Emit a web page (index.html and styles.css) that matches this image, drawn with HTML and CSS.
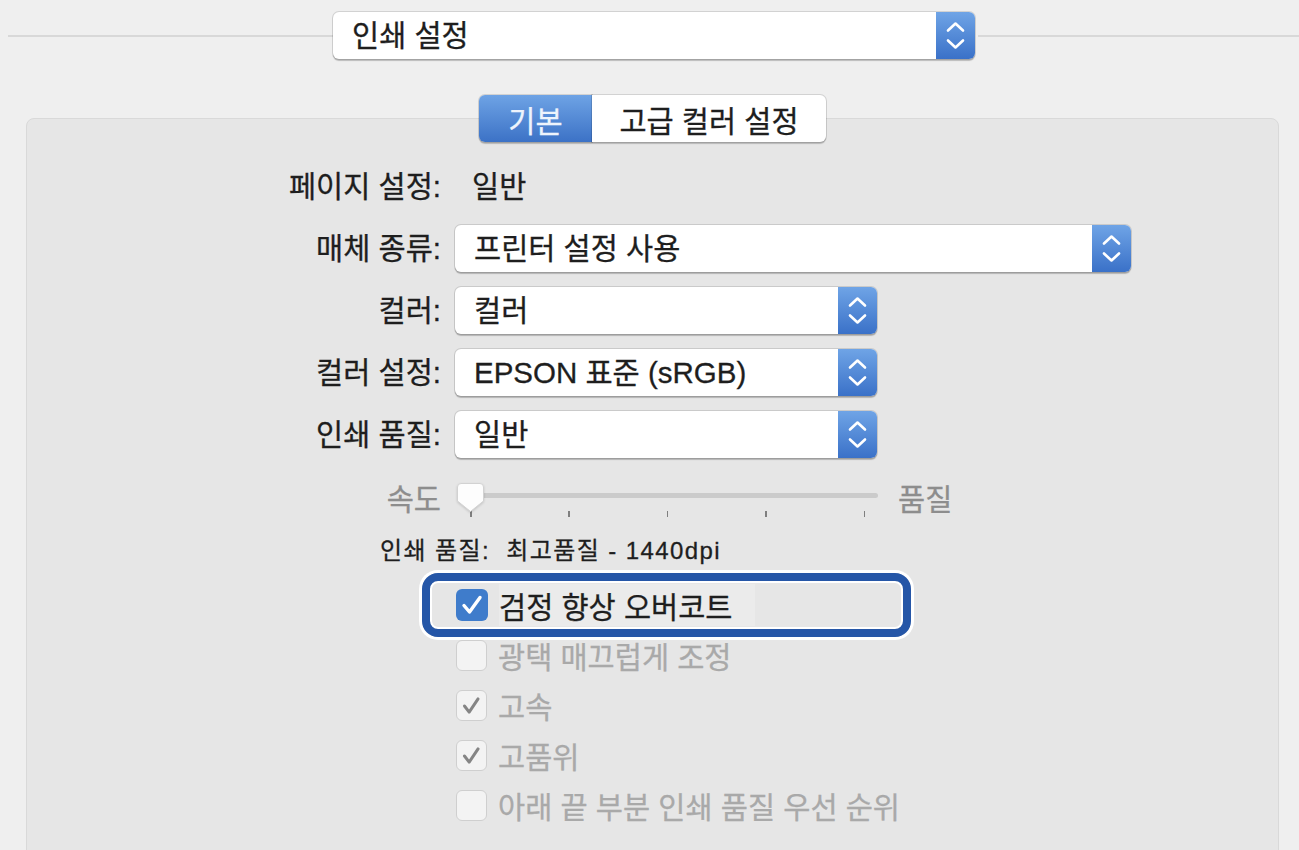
FILE: index.html
```html
<!DOCTYPE html>
<html lang="ko">
<head>
<meta charset="utf-8">
<title>인쇄 설정</title>
<link rel="stylesheet" href="styles.css">
</head>
<body>
<div class="window">
  <div class="header">
    <div class="rule rule-left"></div>
    <div class="popup popup-top">
      <span class="popup-text">인쇄 설정</span>
      <span class="stepper"><svg viewBox="0 0 39 47" width="39" height="47"><path d="M12 18.5 L19.5 11.5 L27 18.5 M12 28.5 L19.5 35.5 L27 28.5" fill="none" stroke="#fff" stroke-width="2.6" stroke-linecap="round" stroke-linejoin="round"/></svg></span>
    </div>
    <div class="rule rule-right"></div>
  </div>

  <div class="panel">
    <div class="tabs">
      <div class="tab tab-active">기본</div>
      <div class="tab">고급 컬러 설정</div>
    </div>

    <div class="form">
      <div class="label">페이지 설정:</div>
      <div class="value">일반</div>

      <div class="label">매체 종류:</div>
      <div class="popup popup-wide">
        <span class="popup-text">프린터 설정 사용</span>
        <span class="stepper"><svg viewBox="0 0 39 47" width="39" height="47"><path d="M12 18.5 L19.5 11.5 L27 18.5 M12 28.5 L19.5 35.5 L27 28.5" fill="none" stroke="#fff" stroke-width="2.6" stroke-linecap="round" stroke-linejoin="round"/></svg></span>
      </div>

      <div class="label">컬러:</div>
      <div class="popup popup-mid">
        <span class="popup-text">컬러</span>
        <span class="stepper"><svg viewBox="0 0 39 47" width="39" height="47"><path d="M12 18.5 L19.5 11.5 L27 18.5 M12 28.5 L19.5 35.5 L27 28.5" fill="none" stroke="#fff" stroke-width="2.6" stroke-linecap="round" stroke-linejoin="round"/></svg></span>
      </div>

      <div class="label">컬러 설정:</div>
      <div class="popup popup-mid">
        <span class="popup-text">EPSON 표준 (sRGB)</span>
        <span class="stepper"><svg viewBox="0 0 39 47" width="39" height="47"><path d="M12 18.5 L19.5 11.5 L27 18.5 M12 28.5 L19.5 35.5 L27 28.5" fill="none" stroke="#fff" stroke-width="2.6" stroke-linecap="round" stroke-linejoin="round"/></svg></span>
      </div>

      <div class="label">인쇄 품질:</div>
      <div class="popup popup-mid">
        <span class="popup-text">일반</span>
        <span class="stepper"><svg viewBox="0 0 39 47" width="39" height="47"><path d="M12 18.5 L19.5 11.5 L27 18.5 M12 28.5 L19.5 35.5 L27 28.5" fill="none" stroke="#fff" stroke-width="2.6" stroke-linecap="round" stroke-linejoin="round"/></svg></span>
      </div>
    </div>

    <div class="slider-row">
      <div class="label label-dim">속도</div>
      <div class="slider-wrap">
        <div class="slider">
          <div class="track"></div>
          <div class="ticks"><i></i><i></i><i></i><i></i><i></i></div>
          <svg class="thumb" viewBox="0 0 29 31" width="29" height="31"><path d="M5 1.5 H24 Q27.5 1.5 27.5 5 V19 L14.5 29.5 L1.5 19 V5 Q1.5 1.5 5 1.5 Z" fill="#fdfdfd" stroke="#d2d2d2" stroke-width="1"/></svg>
        </div>
        <span class="slider-end">품질</span>
      </div>
    </div>

    <div class="info">인쇄 품질:&nbsp; 최고품질 - 1440dpi</div>

    <ul class="checks">
      <li class="check-row focused">
        <span class="box box-on"><svg viewBox="0 0 32 32" width="32" height="32"><path d="M8 16.5 L13.5 23 L24 8.5" fill="none" stroke="#fff" stroke-width="3.4" stroke-linecap="round" stroke-linejoin="round"/></svg></span>
        <span class="check-text">검정 향상 오버코트</span>
      </li>
      <li class="check-row disabled">
        <span class="box"></span>
        <span class="check-text">광택 매끄럽게 조정</span>
      </li>
      <li class="check-row disabled">
        <span class="box"><svg viewBox="0 0 31 31" width="31" height="31"><path d="M8 16 L13 22.5 L22.5 8.5" fill="none" stroke="#858585" stroke-width="3.2" stroke-linecap="round" stroke-linejoin="round"/></svg></span>
        <span class="check-text">고속</span>
      </li>
      <li class="check-row disabled">
        <span class="box"><svg viewBox="0 0 31 31" width="31" height="31"><path d="M8 16 L13 22.5 L22.5 8.5" fill="none" stroke="#858585" stroke-width="3.2" stroke-linecap="round" stroke-linejoin="round"/></svg></span>
        <span class="check-text">고품위</span>
      </li>
      <li class="check-row disabled">
        <span class="box"></span>
        <span class="check-text">아래 끝 부분 인쇄 품질 우선 순위</span>
      </li>
    </ul>
  </div>
</div>
</body>
</html>
```

FILE: styles.css
```css
html, body {
  margin: 0;
  padding: 0;
}

body {
  background: #efefef;
  font-family: "Liberation Sans", "Noto Sans CJK KR", sans-serif;
  color: #1e1e1e;
  width: 1299px;
  height: 850px;
  overflow: hidden;
  -webkit-text-stroke: 0.3px currentColor;
}

.window {
  padding-top: 12px;
}

/* header */
.header {
  display: flex;
  align-items: center;
  height: 47px;
}

.rule {
  height: 2px;
  background: #d8d8d8;
}

.rule-left {
  margin-left: 8px;
  width: 325px;
}

.rule-right {
  flex: 1;
  margin-left: 3px;
}

/* popup buttons */
.popup {
  display: flex;
  align-items: center;
  height: 47px;
  box-sizing: border-box;
  background: #fff;
  border-radius: 6px;
  box-shadow: 0 0 0 1px rgba(0, 0, 0, 0.12), 0 1.5px 1px rgba(0, 0, 0, 0.22);
}

.popup-top {
  width: 642px;
}

.popup-wide {
  width: 676px;
}

.popup-mid {
  width: 422px;
}

.popup-text {
  flex: 1;
  padding-left: 19px;
  font-size: 29.5px;
  line-height: 47px;
  white-space: nowrap;
}

.stepper {
  width: 39px;
  height: 47px;
  border-radius: 0 6px 6px 0;
  background: linear-gradient(#6fa4e6, #3a71c8);
  display: flex;
}

.stepper svg {
  display: block;
}

/* panel */
.panel {
  margin: 59px 20px 0 26px;
  height: 760px;
  background: #e6e6e6;
  border: 1px solid #d9d9d9;
  border-radius: 8px;
}

.tabs {
  display: flex;
  justify-content: center;
  margin-top: -24px;
}

.tab {
  height: 47px;
  box-sizing: border-box;
  display: flex;
  align-items: center;
  justify-content: center;
  font-size: 29.5px;
  background: #fff;
  box-shadow: 0 0 0 1px rgba(0, 0, 0, 0.12), 0 1.5px 1px rgba(0, 0, 0, 0.2);
}

.tab-active {
  width: 113px;
  color: #eef4fc;
  background: linear-gradient(#6ea3e5, #3c72c6);
  border-radius: 6px 0 0 6px;
}

.tab:last-child {
  width: 234px;
  border-radius: 0 6px 6px 0;
}

/* form */
.form {
  display: grid;
  grid-template-columns: 414px 1fr;
  grid-auto-rows: 47px;
  column-gap: 14px;
  row-gap: 15px;
  margin-top: 21px;
}

.label {
  text-align: right;
  font-size: 29.5px;
  line-height: 47px;
  white-space: nowrap;
}

.value {
  padding-left: 17px;
  font-size: 29.5px;
  line-height: 47px;
}

/* slider */
.slider-row {
  display: grid;
  grid-template-columns: 414px 1fr;
  column-gap: 14px;
  height: 40px;
  margin-top: 22px;
}

.label-dim {
  color: #8d8d8d;
  line-height: 40px;
}

.slider-wrap {
  display: flex;
  align-items: center;
  gap: 20px;
}

.slider {
  position: relative;
  width: 423px;
  height: 40px;
}

.track {
  margin: 13px 0 0 5px;
  height: 5px;
  border-radius: 3px;
  background: #cbcbcb;
}

.ticks {
  position: absolute;
  left: 15px;
  top: 31px;
  width: 395px;
  display: flex;
  justify-content: space-between;
}

.ticks i {
  display: block;
  width: 1.5px;
  height: 6px;
  background: #7f7f7f;
}

.thumb {
  position: absolute;
  left: 1px;
  top: 2px;
  filter: drop-shadow(0 1px 1px rgba(0, 0, 0, 0.15));
}

.slider-end {
  font-size: 29.5px;
  color: #8d8d8d;
  line-height: 40px;
}

/* info */
.info {
  margin-top: 16px;
  padding-left: 353px;
  font-size: 24px;
  letter-spacing: 1.4px;
  line-height: 30px;
}

/* checkboxes */
.checks {
  list-style: none;
  margin: 14px 0 0;
  padding: 0 0 0 429px;
}

.check-row {
  position: relative;
  display: flex;
  align-items: center;
  gap: 11px;
  height: 50px;
}

.check-text {
  font-size: 29.5px;
  white-space: nowrap;
}

.box {
  width: 31px;
  height: 31px;
  box-sizing: border-box;
  border-radius: 6px;
  background: #f3f3f3;
  border: 1px solid #cfcfcf;
  display: flex;
  align-items: center;
  justify-content: center;
}

.box-on {
  width: 32px;
  height: 32px;
  border: none;
  background: #3f7ccb;
}

.box svg {
  display: block;
}

.disabled .check-text {
  color: #a9a9a9;
}

.focused .check-text {
  background: #ebebeb;
  padding-right: 22px;
}

.focused::before {
  content: "";
  position: absolute;
  left: -34px;
  top: -7px;
  width: 489px;
  height: 64px;
  box-sizing: border-box;
  border: 8px solid #2556a7;
  border-radius: 16px;
  box-shadow: 0 0 0 3px #fff, inset 0 0 0 2px #fff;
  pointer-events: none;
}
```
